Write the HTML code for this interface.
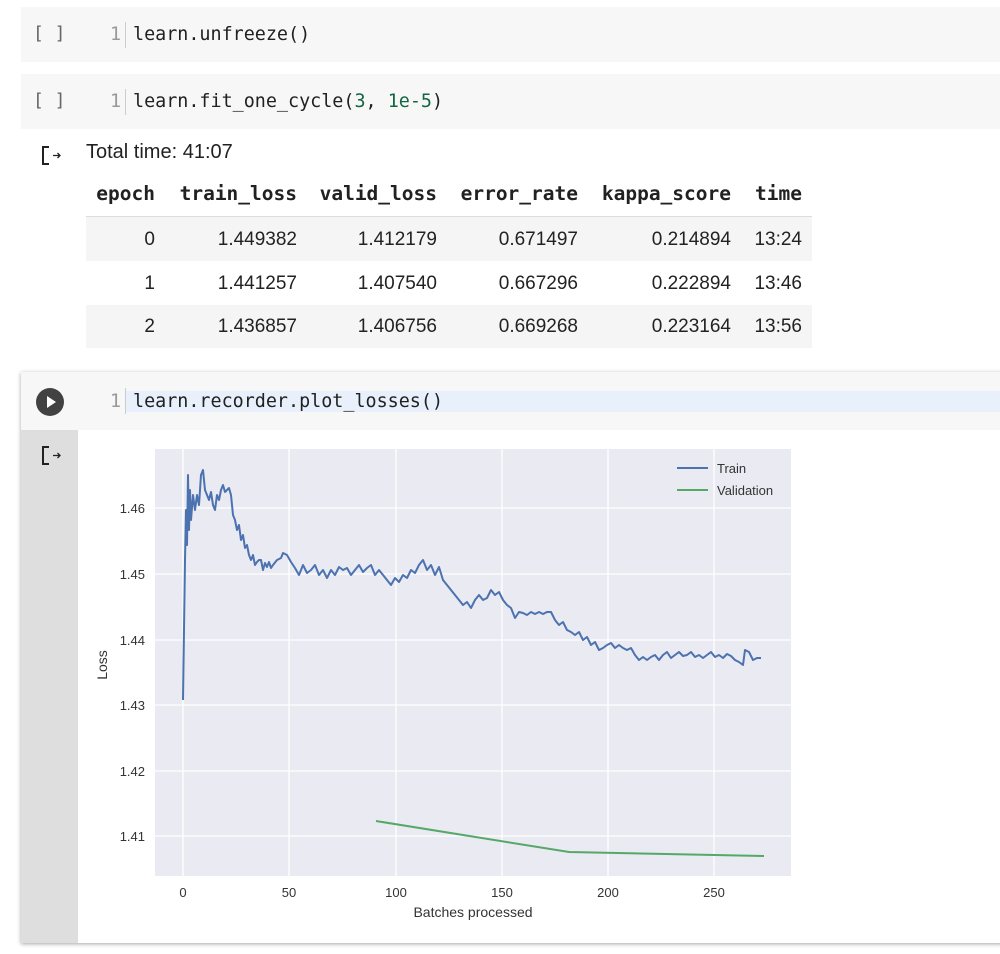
<!DOCTYPE html>
<html><head><meta charset="utf-8"><style>
*{margin:0;padding:0;box-sizing:border-box}
body{width:1000px;height:954px;background:#fff;position:relative;overflow:hidden;font-family:"Liberation Sans",sans-serif;color:#212121}
.a{position:absolute}
.mono{font-family:"DejaVu Sans Mono",monospace;font-size:18.4px;white-space:pre}
.cell{position:absolute;left:21px;width:979px;height:55px;background:#f7f7f7}
.br{position:absolute;left:33px;font-family:"DejaVu Sans Mono",monospace;font-size:18px;color:#666;white-space:pre}
.ln{position:absolute;left:110px;color:#999}
.gut{position:absolute;left:125px;width:1px;height:26px;background:#ccc}
.th{position:absolute;top:182px;font-family:"DejaVu Sans Mono",monospace;font-weight:bold;font-size:19.5px;text-align:right}
.td{position:absolute;font-size:19px;text-align:right;color:#222}
</style></head><body>
<div class="cell" style="top:7px"></div>
<div class="br" style="top:23px">[ ]</div>
<div class="mono a ln" style="top:24px">1</div><div class="gut" style="top:22px"></div>
<div class="mono a" style="left:133px;top:24px">learn.unfreeze()</div>

<div class="cell" style="top:74px"></div>
<div class="br" style="top:90px">[ ]</div>
<div class="mono a ln" style="top:91px">1</div><div class="gut" style="top:89px"></div>
<div class="mono a" style="left:133px;top:91px">learn.fit_one_cycle(<span style="color:#116644">3</span>, <span style="color:#116644">1e-5</span>)</div>

<svg class="a" style="left:40px;top:145px" width="24" height="22" viewBox="0 0 24 22"><path d="M9 2H3v17h6" fill="none" stroke="#222" stroke-width="2"/><path d="M13 10.5h7M17.5 8l2.5 2.5-2.5 2.5" fill="none" stroke="#222" stroke-width="1.3"/></svg>
<div class="a" style="left:86px;top:141px;font-size:20px">Total time: 41:07</div>

<div class="a" style="left:86px;top:216px;width:726px;height:1px;background:#ddd"></div>
<div class="a" style="left:86px;top:217px;width:726px;height:44px;background:#f5f5f5"></div>
<div class="a" style="left:86px;top:305px;width:726px;height:43px;background:#f5f5f5"></div>
<div class="th" style="right:845px">epoch</div>
<div class="th" style="right:703px">train_loss</div>
<div class="th" style="right:563px">valid_loss</div>
<div class="th" style="right:422px">error_rate</div>
<div class="th" style="right:269px">kappa_score</div>
<div class="th" style="right:198px">time</div>

<div class="td" style="top:229px;right:845px">0</div><div class="td" style="top:229px;right:703px">1.449382</div><div class="td" style="top:229px;right:563px">1.412179</div><div class="td" style="top:229px;right:422px">0.671497</div><div class="td" style="top:229px;right:269px">0.214894</div><div class="td" style="top:229px;right:198px">13:24</div>
<div class="td" style="top:273px;right:845px">1</div><div class="td" style="top:273px;right:703px">1.441257</div><div class="td" style="top:273px;right:563px">1.407540</div><div class="td" style="top:273px;right:422px">0.667296</div><div class="td" style="top:273px;right:269px">0.222894</div><div class="td" style="top:273px;right:198px">13:46</div>
<div class="td" style="top:316px;right:845px">2</div><div class="td" style="top:316px;right:703px">1.436857</div><div class="td" style="top:316px;right:563px">1.406756</div><div class="td" style="top:316px;right:422px">0.669268</div><div class="td" style="top:316px;right:269px">0.223164</div><div class="td" style="top:316px;right:198px">13:56</div>

<div class="a" style="left:21px;top:372px;width:990px;height:571px;background:#fff;box-shadow:0 1px 4px rgba(0,0,0,.35)"></div>
<div class="a" style="left:21px;top:372px;width:979px;height:58px;background:#f7f7f7"></div>
<div class="a" style="left:126px;top:391px;width:874px;height:21px;background:#e8f0fb"></div>
<div class="a" style="left:36px;top:388px;width:28px;height:28px;border-radius:50%;background:#424242"></div>
<svg class="a" style="left:44px;top:395px" width="14" height="14"><path d="M3 1L12 7L3 13Z" fill="#fff"/></svg>
<div class="mono a ln" style="top:391px">1</div><div class="gut" style="top:388px"></div>
<div class="mono a" style="left:133px;top:391px">learn.recorder.plot_losses()</div>

<div class="a" style="left:21px;top:430px;width:57px;height:513px;background:#dedede"></div>
<svg class="a" style="left:40px;top:445px" width="24" height="22" viewBox="0 0 24 22"><path d="M9 2H3v17h6" fill="none" stroke="#222" stroke-width="2"/><path d="M13 10.5h7M17.5 8l2.5 2.5-2.5 2.5" fill="none" stroke="#222" stroke-width="1.3"/></svg>

<svg class="a" style="left:0;top:0" width="1000" height="954" font-family="Liberation Sans, sans-serif" font-size="13" fill="#333">
<rect x="155" y="449" width="636" height="427" fill="#eaeaf2"/>
<g stroke="#fff" stroke-width="1.3">
<line x1="183" y1="449" x2="183" y2="876"/><line x1="289" y1="449" x2="289" y2="876"/><line x1="396" y1="449" x2="396" y2="876"/><line x1="502" y1="449" x2="502" y2="876"/><line x1="608" y1="449" x2="608" y2="876"/><line x1="714" y1="449" x2="714" y2="876"/>
<line x1="155" y1="508" x2="791" y2="508"/><line x1="155" y1="574" x2="791" y2="574"/><line x1="155" y1="640" x2="791" y2="640"/><line x1="155" y1="705" x2="791" y2="705"/><line x1="155" y1="771" x2="791" y2="771"/><line x1="155" y1="836" x2="791" y2="836"/>
</g>
<polyline fill="none" stroke="#4c72b0" stroke-width="2" stroke-linejoin="round" points="183,700 185,560 186,510 187,545 188,475 189,530 190,490 191,520 193,495 195,510 197,495 199,505 201,475 203,470 205,490 207,495 209,500 211,492 213,505 215,510 217,495 219,500 221,490 223,485 225,492 227,490 229,488 231,495 233,515 235,520 237,530 239,525 241,540 243,535 245,548 247,545 249,555 251,560 253,555 255,565 257,562 259,560 261,560 263,570 265,563 267,567 269,562 271,568 273,565 277,560 281,558 283,553 287,555 291,562 295,568 299,575 303,565 307,573 311,570 315,565 319,575 323,570 327,578 331,570 335,575 339,567 343,570 347,568 351,575 355,570 359,565 363,572 367,568 371,565 375,575 379,570 383,575 387,580 391,585 395,578 399,582 403,575 407,578 411,570 415,573 419,565 423,560 427,570 431,565 435,575 439,567 443,580 447,585 451,590 455,595 459,600 463,605 467,602 471,608 475,600 479,595 483,600 487,598 491,590 495,595 499,592 503,600 507,605 511,608 515,618 519,612 523,613 527,615 531,612 535,614 539,612 543,614 547,612 551,612 555,620 559,625 563,622 567,630 571,632 575,635 579,632 583,640 587,637 591,645 595,642 599,650 603,648 607,645 611,643 615,648 619,645 623,648 627,650 631,648 635,655 639,660 643,657 647,660 651,657 655,655 659,660 663,655 667,652 671,658 675,655 679,652 683,656 687,655 691,652 695,657 699,655 703,658 707,655 711,652 715,657 719,655 723,658 727,654 731,656 735,660 739,662 743,665 745,650 749,652 753,660 757,658 761,658"/>
<polyline fill="none" stroke="#55a868" stroke-width="2" points="376,821 569,852 764,856"/>
<line x1="677" y1="468" x2="708" y2="468" stroke="#4c72b0" stroke-width="2"/>
<line x1="677" y1="490" x2="708" y2="490" stroke="#55a868" stroke-width="2"/>
<text x="717" y="473">Train</text><text x="717" y="495">Validation</text>
<g text-anchor="end"><text x="145" y="513">1.46</text><text x="145" y="579">1.45</text><text x="145" y="645">1.44</text><text x="145" y="710">1.43</text><text x="145" y="776">1.42</text><text x="145" y="841">1.41</text></g>
<g text-anchor="middle"><text x="183" y="897">0</text><text x="289" y="897">50</text><text x="396" y="897">100</text><text x="502" y="897">150</text><text x="608" y="897">200</text><text x="714" y="897">250</text>
<text x="473" y="917" font-size="14">Batches processed</text>
<text transform="translate(107,665) rotate(-90)" font-size="14">Loss</text></g>
</svg>
</body></html>
